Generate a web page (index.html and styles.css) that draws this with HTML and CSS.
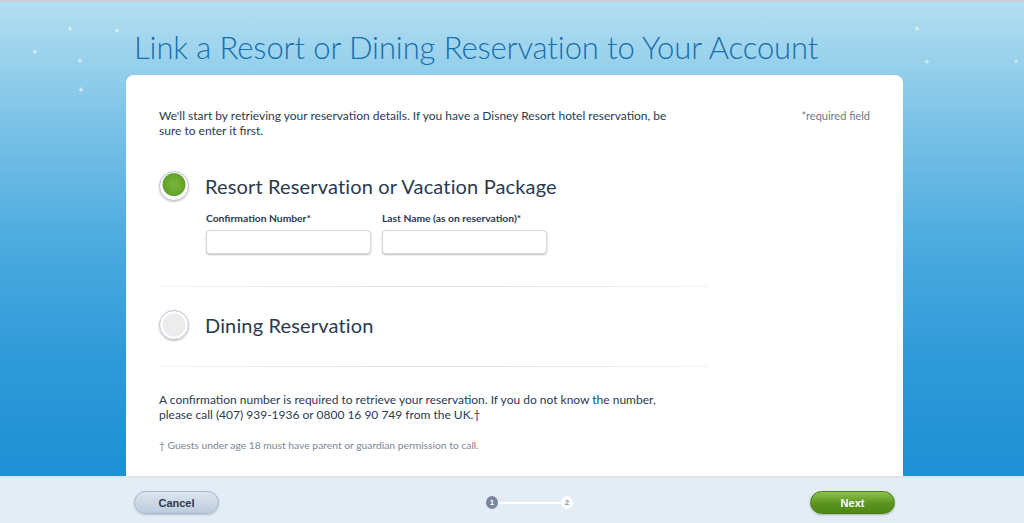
FILE: index.html
```html
<!DOCTYPE html>
<html lang="en">
<head>
  <meta charset="UTF-8">
  <title>Link a Reservation</title>
  <link rel="stylesheet" href="styles.css">
</head>
<body>

  <div class="sky">
    <span class="star s1">✦</span>
    <span class="star s2">✦</span>
    <span class="star s3">✦</span>
    <span class="star s4">✦</span>
    <span class="star s5">✦</span>
    <span class="star s6">✦</span>
    <span class="star s7">✦</span>
    <span class="star s8">✦</span>

    <h1 class="page-title">Link a Resort or Dining Reservation to Your Account</h1>

    <div class="card">
      <div class="card-top">
        <p class="intro">We'll start by retrieving your reservation details. If you have a Disney Resort hotel reservation, be sure to enter it first.</p>
        <span class="required">*required field</span>
      </div>

      <div class="option">
        <span class="radio checked"></span>
        <span class="option-label">Resort Reservation or Vacation Package</span>
      </div>
      <div class="fields">
        <div class="field">
          <label>Confirmation Number*</label>
          <input type="text">
        </div>
        <div class="field">
          <label>Last Name (as on reservation)*</label>
          <input type="text">
        </div>
      </div>

      <hr class="divider">

      <div class="option">
        <span class="radio"></span>
        <span class="option-label">Dining Reservation</span>
      </div>

      <hr class="divider">

      <p class="note">A confirmation number is required to retrieve your reservation. If you do not know the number, please call (407) 939-1936 or 0800 16 90 749 from the UK.†</p>
      <p class="footnote">† Guests under age 18 must have parent or guardian permission to call.</p>
    </div>
  </div>

  <footer class="actions">
    <button class="btn cancel">Cancel</button>
    <div class="steps">
      <span class="step active">1</span>
      <span class="step-line"></span>
      <span class="step">2</span>
    </div>
    <button class="btn next">Next</button>
  </footer>

</body>
</html>
```

FILE: styles.css
```css
html, body {
  margin: 0;
  padding: 0;
  height: 100%;
}
body {
  font-family: Lato, "Open Sans", Arial, sans-serif;
  color: #2b3a4f;
  display: flex;
  flex-direction: column;
  overflow: hidden;
  border-top: 2px solid #c9cfd4;
  box-sizing: border-box;
}
.sky {
  flex: 1;
  position: relative;
  display: flex;
  flex-direction: column;
  min-height: 0;
  background: linear-gradient(to bottom, #b4dff1 0%, #7cc3e7 25%, #4dabdf 50%, #2f9ad9 75%, #1e90d4 100%);
}
.star {
  position: absolute;
  color: rgba(255, 255, 240, 0.6);
  font-size: 9px;
}
.s1 { left: 66px; top: 21px; }
.s2 { left: 113px; top: 23px; }
.s3 { left: 76px; top: 53px; }
.s4 { left: 77px; top: 82px; }
.s5 { left: 31px; top: 44px; }
.s6 { left: 913px; top: 21px; }
.s7 { left: 923px; top: 54px; }
.s8 { left: 1013px; top: 55px; font-size: 7px; }
.page-title {
  margin: 27px 0 9px 134px;
  font-size: 31px;
  font-weight: 300;
  line-height: 37px;
  color: #176fae;
  letter-spacing: -0.1px;
}
.card {
  flex: 1;
  background: #fff;
  margin: 0 121px 0 126px;
  border-radius: 8px 8px 0 0;
  padding: 33px 33px 0 33px;
  box-sizing: border-box;
}
.card-top {
  display: flex;
  justify-content: space-between;
}
.intro {
  margin: 0;
  width: 512px;
  font-size: 12px;
  line-height: 15px;
}
.required {
  font-size: 11px;
  color: #6d7a8c;
  line-height: 15px;
}
.option {
  display: flex;
  align-items: center;
  gap: 16px;
  margin-top: 33px;
}
.radio {
  width: 30px;
  height: 30px;
  border-radius: 50%;
  box-sizing: border-box;
  border: 1px solid #b9c3d3;
  background: radial-gradient(circle, #ececec 0, #ececec 11px, #fff 12px);
  box-shadow: 0 1px 2px rgba(0, 0, 0, 0.25);
}
.radio.checked {
  background: radial-gradient(circle at 50% 45%, #7ab83c 0, #64a12a 11px, #fff 12px);
}
.option-label {
  font-size: 20px;
  letter-spacing: 0.15px;
  color: #2b3a4f;
}
.fields {
  display: flex;
  gap: 11px;
  margin: 11px 0 0 47px;
}
.field label {
  display: block;
  font-size: 10.3px;
  font-weight: 700;
  line-height: 13px;
  margin-bottom: 5px;
  color: #2b3a4f;
}
.field input {
  display: block;
  width: 165px;
  height: 24px;
  box-sizing: border-box;
  border: 1px solid #d5d9de;
  border-radius: 4px;
  box-shadow: 0 1px 2px rgba(0, 0, 0, 0.25);
}
.divider {
  border: 0;
  height: 1px;
  width: 550px;
  margin: 32px 0 0 0;
  background: linear-gradient(to right, #f2f3f5, #dfe2e6 50%, #f2f3f5);
}
.divider + .option {
  margin-top: 23px;
}
.option + .divider {
  margin-top: 26px;
}
.note {
  margin: 25px 0 0 0;
  width: 510px;
  font-size: 12px;
  line-height: 15px;
}
.footnote {
  margin: 17px 0 0 0;
  font-size: 10.3px;
  color: #7a8799;
}
.actions {
  height: 47px;
  flex-shrink: 0;
  display: flex;
  align-items: center;
  justify-content: space-between;
  padding: 4px 129px 0 134px;
  background: #e4edf6;
  border-top: 2px solid #dde3ea;
  box-sizing: border-box;
}
.btn {
  width: 85px;
  height: 23px;
  border-radius: 12px;
  font-family: "Liberation Sans", Arial, sans-serif;
  font-size: 11px;
  font-weight: 700;
  cursor: pointer;
}
.cancel {
  color: #2e3a4d;
  border: 1px solid #a9b7ca;
  background: linear-gradient(to bottom, #dde6f1, #bccbdd);
  box-shadow: 0 1px 2px rgba(0, 0, 0, 0.2);
}
.next {
  color: #fff;
  border: 1px solid #4d7f19;
  background: linear-gradient(to bottom, #8cc24a, #5c9420 55%, #4f8716);
  box-shadow: 0 1px 2px rgba(0, 0, 0, 0.25);
}
.steps {
  display: flex;
  align-items: center;
  margin-left: 30px;
}
.step {
  width: 12px;
  height: 13px;
  border-radius: 50%;
  font-family: "Liberation Sans", Arial, sans-serif;
  font-size: 8px;
  font-weight: 700;
  display: flex;
  align-items: center;
  justify-content: center;
  background: #fff;
  color: #8a97a8;
}
.step.active {
  background: #77869c;
  color: #fff;
}
.step-line {
  width: 63px;
  height: 2px;
  background: #fff;
}
```
